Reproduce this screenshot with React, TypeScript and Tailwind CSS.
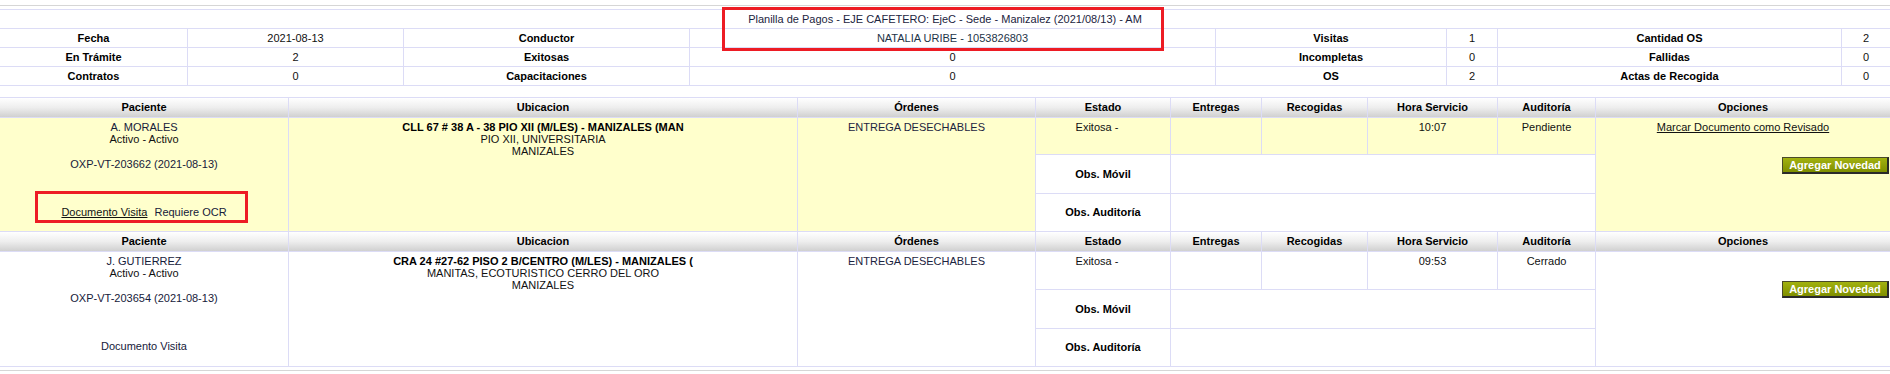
const HEADERS = [
  "Paciente",
  "Ubicacion",
  "Órdenes",
  "Estado",
  "Entregas",
  "Recogidas",
  "Hora Servicio",
  "Auditoría",
  "Opciones",
];

const visits = [
  {
    id: 1,
    pending: true,
    name: "A. MORALES",
    code: "OXP-VT-203662 (2021-08-13)",
    address: [
      "CLL 67 # 38 A - 38 PIO XII (M/LES) - MANIZALES (MAN",
      "PIO XII, UNIVERSITARIA",
      "MANIZALES",
    ],
    time: "10:07",
    audit: "Pendiente",
  },
  {
    id: 2,
    pending: false,
    name: "J. GUTIERREZ",
    code: "OXP-VT-203654 (2021-08-13)",
    address: [
      "CRA 24 #27-62 PISO 2 B/CENTRO (M/LES) - MANIZALES (",
      "MANITAS, ECOTURISTICO CERRO DEL ORO",
      "MANIZALES",
    ],
    time: "09:53",
    audit: "Cerrado",
  },
];

function Label({ children }: { children: React.ReactNode }) {
  return (
    <div className="bg-white flex items-center justify-center font-bold text-black">
      {children}
    </div>
  );
}

function Value({ children }: { children: React.ReactNode }) {
  return (
    <div className="bg-white flex items-center justify-center text-[#111]">
      {children}
    </div>
  );
}

function SummaryTable() {
  return (
    <div className="mt-[3px] grid grid-cols-[187px_215px_285px_525px_230px_50px_343px_48px] grid-rows-[18px_18px_18px_18px] gap-px bg-[#dcdcf6] border-y border-[#dcdcf6]">
      <div className="col-span-8 bg-white flex items-center justify-center text-[#1c2440]">
        Planilla de Pagos - EJE CAFETERO: EjeC - Sede - Manizalez (2021/08/13) - AM
      </div>
      <Label>Fecha</Label>
      <Value>2021-08-13</Value>
      <Label>Conductor</Label>
      <Value>
        <span className="text-[#1d3448]">NATALIA URIBE - 1053826803</span>
      </Value>
      <Label>Visitas</Label>
      <Value>1</Value>
      <Label>Cantidad OS</Label>
      <Value>2</Value>

      <Label>En Trámite</Label>
      <Value>2</Value>
      <Label>Exitosas</Label>
      <Value>0</Value>
      <Label>Incompletas</Label>
      <Value>0</Value>
      <Label>Fallidas</Label>
      <Value>0</Value>

      <Label>Contratos</Label>
      <Value>0</Value>
      <Label>Capacitaciones</Label>
      <Value>0</Value>
      <Label>OS</Label>
      <Value>2</Value>
      <Label>Actas de Recogida</Label>
      <Value>0</Value>
    </div>
  );
}

function AddButton({ className }: { className: string }) {
  return (
    <button
      className={`float-right mr-px h-[17px] w-[107px] border border-[#4a4a2a] border-r-2 border-b-2 border-r-[#2a2a2a] border-b-[#2a2a2a] bg-linear-to-b from-[#a2b210] to-[#7f8f00] font-bold text-white leading-[13px] ${className}`}
    >
      Agregar Novedad
    </button>
  );
}

function Visit({ v }: { v: (typeof visits)[number] }) {
  const bg = v.pending ? "bg-[#ffffcc]" : "bg-white";
  return (
    <>
      {HEADERS.map((h) => (
        <div
          key={h}
          className="flex items-center justify-center bg-linear-to-b from-white via-[#eeeeee] to-[#d0d0d0] font-bold text-black"
        >
          {h}
        </div>
      ))}

      <div className={`row-span-3 ${bg} pt-[3px] text-center leading-[12px] text-[#16203a]`}>
        <div>{v.name}</div>
        <div className="text-[#111]">Activo - Activo</div>
        <div className="mt-[13px]">{v.code}</div>
        <div className="mt-[36px]">
          {v.pending ? (
            <>
              <a className="underline text-[#111] cursor-pointer">Documento Visita</a>
              <span className="ml-[7px]">Requiere OCR</span>
            </>
          ) : (
            <span>Documento Visita</span>
          )}
        </div>
      </div>

      <div className={`row-span-3 ${bg} pt-[3px] text-center leading-[12px] text-[#111]`}>
        <div className="font-bold text-black">{v.address[0]}</div>
        <div>{v.address[1]}</div>
        <div>{v.address[2]}</div>
      </div>

      <div className={`row-span-3 ${bg} pt-[3px] text-center leading-[12px] text-[#1c2440]`}>
        ENTREGA DESECHABLES
      </div>

      <div className={`${bg} pt-[3px] pr-[12px] text-center leading-[12px] text-[#111]`}>
        Exitosa -
      </div>
      <div className={bg} />
      <div className={bg} />
      <div className={`${bg} pt-[3px] text-center leading-[12px] text-[#111]`}>{v.time}</div>
      <div className={`${bg} pt-[3px] text-center leading-[12px] text-[#111]`}>{v.audit}</div>

      <div className={`row-span-3 ${bg} pt-[3px] text-center leading-[12px]`}>
        {v.pending ? (
          <>
            <a className="underline text-[#111] cursor-pointer">
              Marcar Documento como Revisado
            </a>
            <div>
              <AddButton className="mt-[24px]" />
            </div>
          </>
        ) : (
          <AddButton className="mt-[26px]" />
        )}
      </div>

      <div className="col-start-4 bg-white flex items-center justify-center font-bold text-black">
        Obs. Móvil
      </div>
      <div className="col-span-4 bg-white" />
      <div className="col-start-4 bg-white flex items-center justify-center font-bold text-black">
        Obs. Auditoría
      </div>
      <div className="col-span-4 bg-white" />
    </>
  );
}

export default function App() {
  return (
    <div className="relative w-[1890px] h-[374px] overflow-hidden bg-white pt-[5px] font-['Liberation_Sans',Arial,sans-serif] text-[11px]">
      <div className="border-t border-[#d6d6d6]" />
      <SummaryTable />

      <div className="mt-[11px] grid grid-cols-[288px_508px_237px_134px_90px_105px_129px_97px_1fr] grid-rows-[19px_36px_38px_37px_19px_37px_38px_37px] gap-px bg-[#dcdcf6] border-y border-[#dcdcf6]">
        {visits.map((v) => (
          <Visit key={v.id} v={v} />
        ))}
      </div>
      <div className="mt-[3px] border-t border-[#d6d6d6]" />

      {/* annotation boxes */}
      <div className="pointer-events-none absolute left-[722px] top-[7px] h-[44px] w-[442px] border-[3px] border-[#ed1c24]" />
      <div className="pointer-events-none absolute left-[35px] top-[191px] h-[32px] w-[213px] border-[3px] border-[#ed1c24]" />
    </div>
  );
}
